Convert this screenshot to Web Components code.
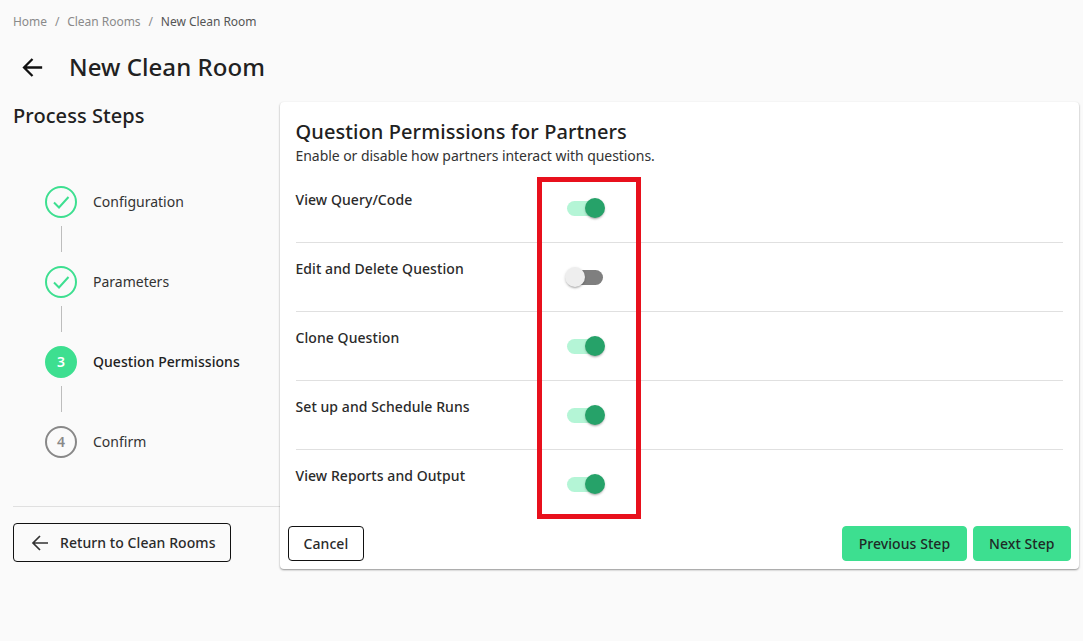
<!DOCTYPE html>
<html lang="en"><head><meta charset="utf-8"><title>New Clean Room</title>
<style>
html,body{margin:0;height:100%}
body{background:#fafafa;font-family:"Noto Sans","Open Sans",sans-serif;color:#212121;overflow:hidden}
</style></head><body>
<cr-app></cr-app>
<script>
const ARROW=(s,c,w)=>`<svg width="${s}" height="${s}" viewBox="0 0 24 24" aria-hidden="true"><path d="M20 12H5M12 5l-7 7 7 7" fill="none" stroke="${c}" stroke-width="${w}"/></svg>`;
function def(name,css,html,init){
  customElements.define(name,class extends HTMLElement{
    constructor(){super();this.attachShadow({mode:'open'}).innerHTML=`<style>${css}</style>${typeof html==='function'?html(this):html}`;}
    connectedCallback(){if(init)init(this);}
  });
}
def('cr-breadcrumbs',`:host{display:flex;gap:7.9px;height:17px;align-items:center;font-size:12px;line-height:17px;color:#8a8a8a;padding:13px 0 0 13px;letter-spacing:-.03px}
 .cur{color:#555}`,`<span>Home</span><span>/</span><span>Clean Rooms</span><span>/</span><span class="cur">New Clean Room</span>`);
def('cr-header',`:host{display:flex;align-items:center;height:34px;padding:20px 0 0 18px}
 svg{display:block;margin-right:22px}
 h1{margin:0;font-size:24px;font-weight:500;line-height:34px;color:#212121;letter-spacing:.05px}`,
 `${ARROW(29,'#111',1.9)}<h1><slot></slot></h1>`);
def('cr-step',`:host{display:flex;align-items:center;height:32px;gap:16px;font-size:14px;line-height:20px;color:#333;position:relative}
 .c{width:32px;height:32px;box-sizing:border-box;border-radius:50%;border:2px solid #3ddf90;display:flex;align-items:center;justify-content:center;font-size:14px;font-weight:600;flex:none}
 :host([state=active]) .c{background:#3ddf90;color:#fff}
 :host([state=active]) .t{font-weight:500;color:#212121;letter-spacing:.05px}
 :host([state=todo]) .c{border-color:#888;color:#888}
 .t{font-weight:400}
 svg{display:block}`,
 h=>{const s=h.getAttribute('state');return `<div class="c">${s==='done'?'<svg width="22" height="22" viewBox="0 0 22 22" aria-hidden="true"><path d="M4 11.5l5 5L18.5 6" fill="none" stroke="#3ddf90" stroke-width="2"/></svg>':(h.getAttribute('n')||'')}</div><span class="t"><slot></slot></span>`});
def('cr-connector',`:host{display:block;width:1px;height:26px;background:#bdbdbd;margin:8px 0 14px 16px}`,``);
def('cr-sidebar',`:host{display:flex;flex-direction:column;width:267px;margin-left:13px;flex:none}
 h2{margin:0;font-size:20px;font-weight:500;line-height:28px;color:#212121;letter-spacing:.07px}
 .steps{padding:56px 0 0 32px;display:flex;flex-direction:column}
 hr{border:0;border-top:1px solid #e0e0e0;margin:48px 0 16px}
 .ret{display:inline-flex}`,
 `<h2>Process Steps</h2><div class="steps"><slot></slot></div><hr><div class="ret"><slot name="ret"></slot></div>`);
def('cr-button',`:host{display:inline-flex;align-items:center;justify-content:center;box-sizing:border-box;height:35px;border-radius:4px;font-size:14px;font-weight:500;line-height:20px;padding:0 15px;color:#2a2a2a;border:1px solid #111;letter-spacing:.07px;white-space:nowrap;background:transparent;cursor:pointer}
 :host([primary]){background:#3ddf90;border-color:#3ddf90;color:#1f2a26;padding:0 15.4px}
 :host([cancel]){padding:0 14.5px}
 :host([back]){height:39px;padding:0 14px 0 14px;gap:8px}
 svg{display:block}`,
 h=>`${h.hasAttribute('back')?ARROW(24,'#333',1.7):''}<slot></slot>`);
def('cr-switch',`:host{display:block;width:40px;height:20px;position:relative;flex:none}
 .track{position:absolute;left:2px;right:2px;top:3px;height:15px;border-radius:8px;background:#b4f5d6}
 .thumb{position:absolute;right:0;top:0;width:20px;height:20px;border-radius:50%;background:#26a269;box-shadow:0 2px 2px -1px rgba(0,0,0,.25),0 1px 3px rgba(0,0,0,.15)}
 :host([off]) .track{background:#7f7f7f}
 :host([off]) .thumb{right:auto;left:0;background:#eee}`,
 `<div class="track"></div><div class="thumb"></div>`);
def('cr-row',`:host{display:flex;height:68px;box-sizing:content-box;border-bottom:1px solid #e0e0e0;position:relative}
 :host([last]){border-bottom:0}
 .l{width:271px;margin-left:-.5px;font-size:14px;font-weight:500;line-height:20px;padding-top:16px;color:#2a2a2a;letter-spacing:.07px;flex:none}
 .s{padding-top:24px;margin-left:-1.5px}`,
 h=>`<div class="l"><slot></slot></div><div class="s"><cr-switch ${h.hasAttribute('off')?'off':''}></cr-switch></div>`);
def('cr-card',`:host{display:block;position:relative;width:799px;height:467px;box-sizing:border-box;background:#fff;border-radius:4px;box-shadow:0 1px 2px rgba(0,0,0,.42);padding:16px 16px 0;flex:none}
 h3{margin:0 0 0 -.5px;font-size:20px;font-weight:500;line-height:28px;color:#212121;letter-spacing:.09px}
 p{margin:0 0 0 -.5px;font-size:14px;line-height:20px;color:#333;letter-spacing:-.05px}
 .rows{margin-top:8px}
 .foot{display:flex;gap:6px;position:absolute;left:8px;right:8px;bottom:8px}
 .sp{flex:1}
 .mark{position:absolute;left:257px;top:75px;width:104px;height:342px;box-sizing:border-box;border:5px solid #e8101c;pointer-events:none}`,
 `<h3><slot name="title"></slot></h3><p><slot name="sub"></slot></p><div class="rows"><slot></slot></div>
  <div class="foot"><slot name="cancel"></slot><div class="sp"></div><slot name="actions"></slot></div><div class="mark"></div>`);
def('cr-app',`:host{display:block}
 .main{display:flex;margin-top:18px}`,
 `<cr-breadcrumbs></cr-breadcrumbs><cr-header>New Clean Room</cr-header>
 <div class="main">
  <cr-sidebar>
   <cr-step state="done">Configuration</cr-step><cr-connector></cr-connector>
   <cr-step state="done">Parameters</cr-step><cr-connector></cr-connector>
   <cr-step state="active" n="3">Question Permissions</cr-step><cr-connector></cr-connector>
   <cr-step state="todo" n="4">Confirm</cr-step>
   <cr-button slot="ret" back>Return to Clean Rooms</cr-button>
  </cr-sidebar>
  <cr-card>
   <span slot="title">Question Permissions for Partners</span>
   <span slot="sub">Enable or disable how partners interact with questions.</span>
   <cr-row>View Query/Code</cr-row>
   <cr-row off>Edit and Delete Question</cr-row>
   <cr-row>Clone Question</cr-row>
   <cr-row>Set up and Schedule Runs</cr-row>
   <cr-row last>View Reports and Output</cr-row>
   <cr-button slot="cancel" cancel>Cancel</cr-button>
   <cr-button slot="actions" primary>Previous Step</cr-button>
   <cr-button slot="actions" primary>Next Step</cr-button>
  </cr-card>
 </div>`);
</script>
</body></html>
